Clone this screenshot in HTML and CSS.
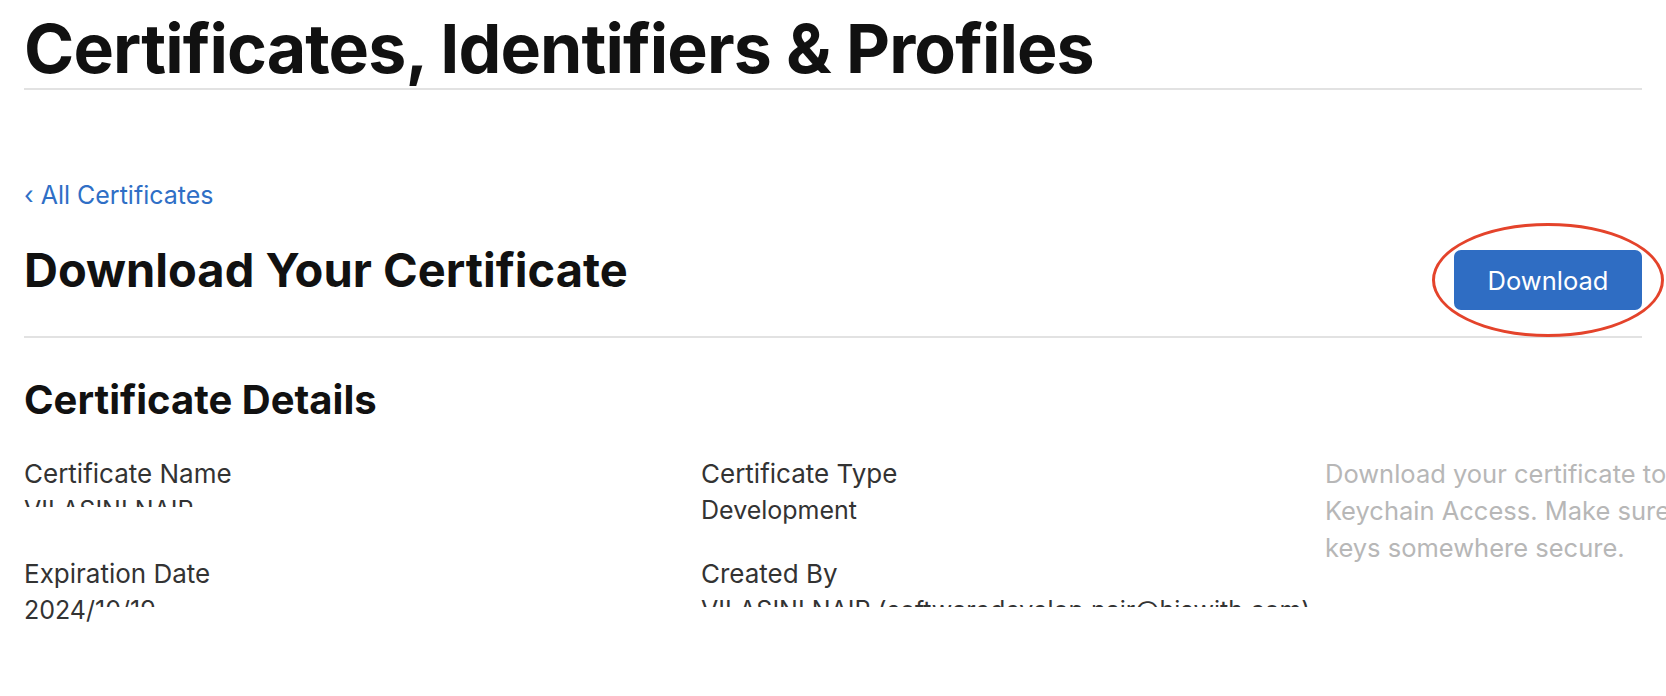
FILE: index.html
```html
<!DOCTYPE html>
<html lang="en">
<head>
<meta charset="utf-8">
<title>Certificates, Identifiers &amp; Profiles</title>
<link rel="stylesheet" href="styles.css">
</head>
<body>
<div class="page">
  <header class="page-head">
    <h1 class="page-title">Certificates, Identifiers &amp; Profiles</h1>
  </header>
  <main class="content">
    <a class="back-link" href="#"><span class="chev">‹</span> All Certificates</a>
    <div class="section-head">
      <h2 class="section-title">Download Your Certificate</h2>
      <div class="btn-wrap">
        <button class="btn-primary" type="button">Download</button>
        <span class="annotation"></span>
      </div>
    </div>
    <h3 class="details-title">Certificate Details</h3>
    <div class="details">
      <div class="col">
        <div class="field">
          <div class="label">Certificate Name</div>
          <div class="value"><span class="redact">VILASINI NAIR</span></div>
        </div>
        <div class="field">
          <div class="label">Expiration Date</div>
          <div class="value">2024/<span class="redact">10/19</span></div>
        </div>
      </div>
      <div class="col">
        <div class="field">
          <div class="label">Certificate Type</div>
          <div class="value">Development</div>
        </div>
        <div class="field">
          <div class="label">Created By</div>
          <div class="value"><span class="redact">VILASINI NAIR (softwaredevelop.nair@hiswith.com)</span></div>
        </div>
      </div>
      <p class="note">Download your certificate to your Mac, then double click the .cer file to install in<br>Keychain Access. Make sure to save a backup copy of your private and public<br>keys somewhere secure.</p>
    </div>
  </main>
</div>
</body>
</html>
```
FILE: styles.css
```css
html, body {
  margin: 0;
  padding: 0;
  background: #fff;
  overflow: hidden;
}
body {
  font-family: Inter, "Noto Sans", "Liberation Sans", sans-serif;
  color: #1d1d1f;
}
.page {
  padding: 0 24px;
}
.page-head {
  padding-top: 8px;
  border-bottom: 2px solid #e2e2e2;
}
.page-title {
  margin: 0;
  font-size: 68px;
  line-height: 80px;
  font-weight: 700;
  color: #111;
  letter-spacing: -0.9px;
}
.content {
  padding-top: 87px;
}
.back-link {
  display: block;
  font-size: 25px;
  line-height: 36px;
  color: #2f6fc6;
  text-decoration: none;
}
.section-head {
  display: flex;
  justify-content: space-between;
  align-items: flex-start;
  padding-top: 29px;
  padding-bottom: 26px;
  border-bottom: 2px solid #e2e2e2;
}
.section-title {
  margin: 0;
  font-size: 47px;
  line-height: 56px;
  font-weight: 700;
  color: #111;
}
.btn-wrap {
  position: relative;
  margin-top: 8px;
}
.btn-primary {
  display: block;
  width: 188px;
  height: 60px;
  border: none;
  border-radius: 7px;
  background: #2f6dc3;
  color: #fff;
  font-family: inherit;
  font-size: 25.5px;
}
.annotation {
  position: absolute;
  left: -22px;
  top: -27px;
  width: 226px;
  height: 108px;
  border: 3px solid #e4432b;
  border-radius: 50%;
  pointer-events: none;
}
.details-title {
  margin: 38px 0 31px;
  font-size: 40px;
  line-height: 48px;
  font-weight: 700;
  color: #111;
}
.details {
  display: grid;
  grid-template-columns: 677px 624px 900px;
  font-size: 25px;
  line-height: 37px;
  color: #333;
}
.label {
  font-size: 26px;
}
.field {
  margin-bottom: 26px;
}
.redact {
  display: inline-block;
  height: 15px;
  overflow: hidden;
  vertical-align: top;
  white-space: nowrap;
}
.note {
  margin: 0;
  font-size: 25.5px;
  color: #b7b7b7;
  white-space: nowrap;
}
```
